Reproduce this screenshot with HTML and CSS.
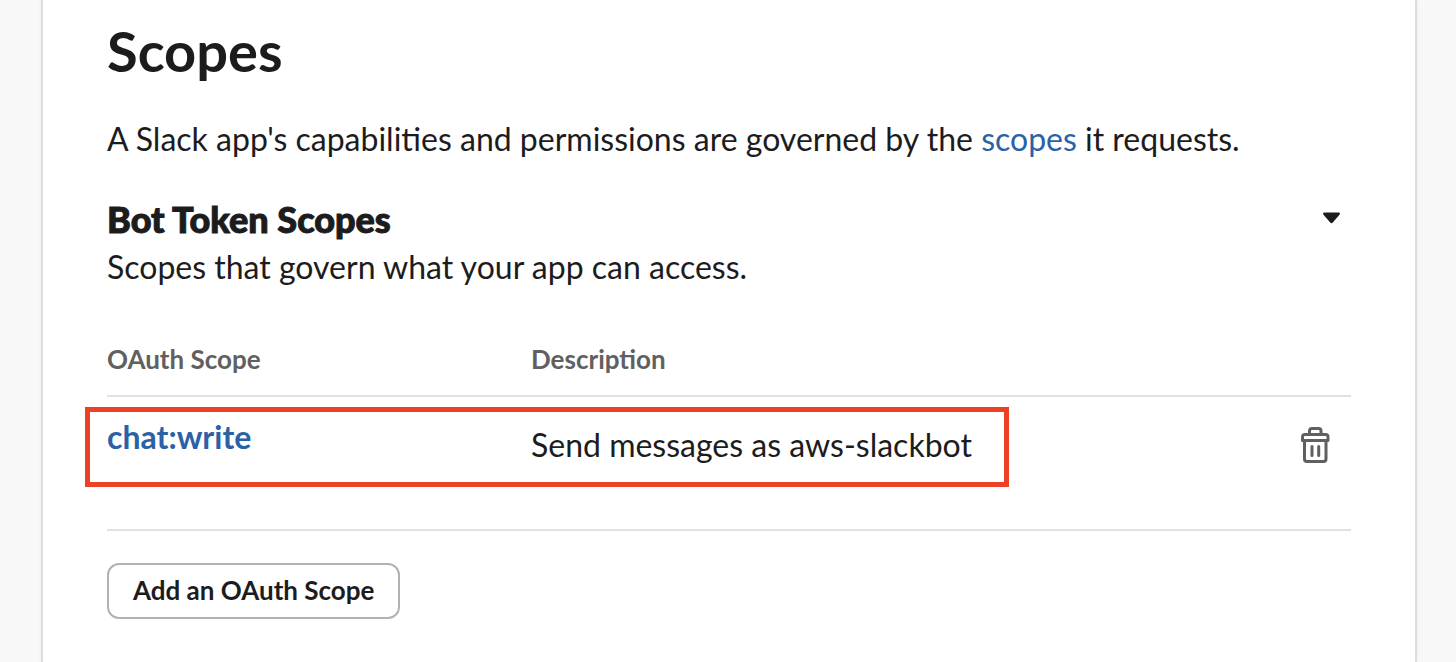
FILE: index.html
```html
<!DOCTYPE html>
<html lang="en">
<head>
<meta charset="utf-8">
<title>Scopes</title>
<link rel="stylesheet" href="styles.css">
</head>
<body>
<main class="panel">
  <h1 class="title">Scopes</h1>
  <p class="intro">A Slack app's capabilities and permissions are governed by the <a class="link" href="#scopes">scopes</a> it requests.</p>
  <section class="group">
    <div class="group-head">
      <h2 class="group-title">Bot Token Scopes</h2>
      <button class="icon-button collapse" type="button" aria-label="Collapse">
        <svg class="caret" viewBox="0 0 18 12" aria-hidden="true"><path d="M1.500 .4h15q1.600 .6 .7 2L10.300 10.600q-1.300 1.200-2.600 0L.8 2.400q-.9-1.400 .7-2z"/></svg>
      </button>
    </div>
    <p class="group-text">Scopes that govern what your app can access.</p>
    <table class="scopes">
      <thead>
        <tr><th class="col-scope" scope="col">OAuth Scope</th><th scope="col">Description</th><th class="col-action"></th></tr>
      </thead>
      <tbody>
        <tr class="scope-row">
          <td class="scope-cell"><a class="link scope-name" href="#chat-write">chat:write</a><span class="highlight"></span></td>
          <td class="description">Send messages as aws-slackbot</td>
          <td class="action">
            <button class="icon-button" type="button" aria-label="Delete scope">
              <svg class="trash" viewBox="0 0 30 36" aria-hidden="true"><path d="M9.500 7V4q0-2.500 2.500-2.500h6.500q2.500 0 2.500 2.500v3M2.500 13.500V10q0-2.500 2.500-2.500h20.500q2.500 0 2.500 2.500v3.500zM4.500 14v18q0 2.500 2.500 2.500h16.500q2.500 0 2.500-2.500V14M12 19.500v9M18.700 19.500v9"/></svg>
            </button>
          </td>
        </tr>
      </tbody>
    </table>
  </section>
  <button class="add-button" type="button">Add an OAuth Scope</button>
</main>
</body>
</html>
```
FILE: styles.css
```css
* {
  box-sizing: border-box;
}

body {
  margin: 0;
  background: #f8f8f8;
  color: #1d1c1d;
  font: 32px/48px Lato, sans-serif;
}

.panel {
  min-height: 100vh;
  margin: 0 39px 0 41px;
  padding: 19px 64px 43px;
  background: #fff;
  border: solid #dddddd;
  border-width: 0 2px;
  box-shadow: 0 0 4px rgba(0, 0, 0, 0.06);
}

h1, h2, p {
  margin: 0;
}

.title {
  margin-bottom: 32px;
  font-size: 56px;
  line-height: 64px;
  font-weight: 700;
}

.intro {
  margin-bottom: 34px;
}

.link {
  color: #2a62a5;
  text-decoration: none;
}

.group-head {
  display: flex;
  align-items: center;
  justify-content: space-between;
  margin-bottom: 2px;
  padding-right: 10px;
}

.group-title {
  font-size: 36px;
  line-height: 44px;
  font-weight: 900;
  -webkit-text-stroke: 1px #1d1c1d;
}

.icon-button {
  padding: 0;
  border: 0;
  background: none;
  line-height: 0;
  cursor: pointer;
}

.collapse {
  padding-bottom: 2px;
}

.caret {
  width: 19px;
  height: 12px;
  fill: #1d1c1d;
}

.scopes {
  width: 100%;
  margin: 50px 0 32px;
  border-collapse: separate;
  border-spacing: 0;
  table-layout: fixed;
}

.scopes th {
  height: 56px;
  padding: 0 0 18px;
  border-bottom: 2px solid #e1e1e1;
  color: #616061;
  font-size: 26px;
  line-height: 36px;
  font-weight: 700;
  text-align: left;
}

.scopes .col-scope {
  width: 424px;
}

.scopes .col-action {
  width: 80px;
}

.scope-row {
  position: relative;
}

.scopes td {
  height: 134px;
  padding: 24px 0 0;
  border-bottom: 2px solid #e1e1e1;
  vertical-align: top;
}

.scopes .scope-cell {
  padding-top: 16px;
}

.scope-name {
  font-weight: 700;
}

.scopes .action {
  padding: 30px 21px 0 0;
  line-height: 0;
  text-align: right;
}

.trash {
  width: 30px;
  height: 36px;
  fill: none;
  stroke: #616061;
  stroke-width: 3;
  stroke-linecap: round;
  stroke-linejoin: round;
}

.highlight {
  position: absolute;
  top: 10px;
  right: 342px;
  left: -22px;
  height: 80px;
  border: 5px solid #ec4027;
  pointer-events: none;
}

.add-button {
  display: block;
  padding: 7px 24px 9px;
  border: 2px solid #b3b2b3;
  border-radius: 12px;
  background: #fff;
  color: #1d1c1d;
  font: 700 26px/36px Lato, sans-serif;
  cursor: pointer;
}
```
